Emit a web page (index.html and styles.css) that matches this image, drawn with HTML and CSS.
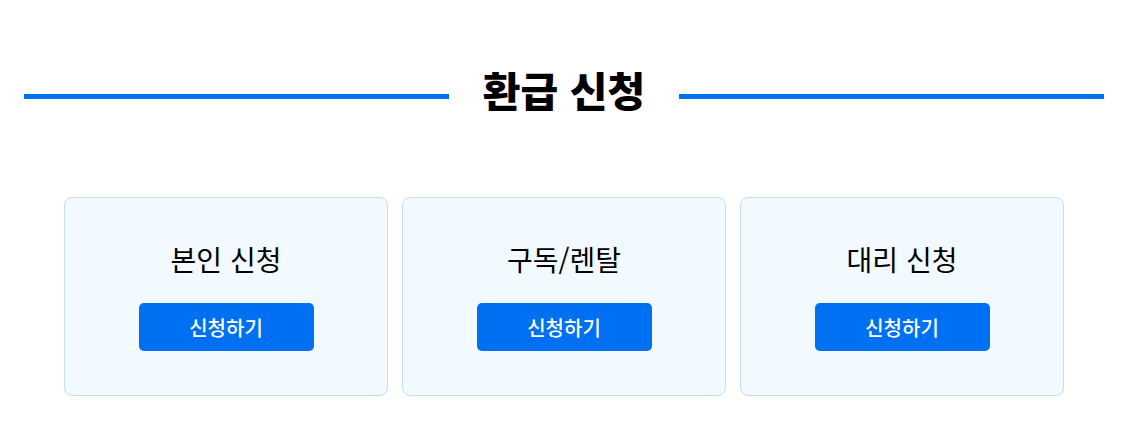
FILE: index.html
```html
<!DOCTYPE html>
<html lang="ko">
<head>
  <meta charset="UTF-8" />
  <meta name="viewport" content="width=device-width, initial-scale=1" />
  <title>환급 신청</title>
  <link rel="stylesheet" href="styles.css">
</head>
<body>

  <!-- 제목 -->
  <div class="section-title">
    <span class="line"></span>
    <h2>환급 신청</h2>
    <span class="line"></span>
  </div>

  <!-- 신청 유형 -->
  <div class="cards">
    <div class="card">
      <h3>본인 신청</h3>
      <button type="button">신청하기</button>
    </div>
    <div class="card">
      <h3>구독/렌탈</h3>
      <button type="button">신청하기</button>
    </div>
    <div class="card">
      <h3>대리 신청</h3>
      <button type="button">신청하기</button>
    </div>
  </div>

</body>
</html>
```

FILE: styles.css
```css
* {
  box-sizing: border-box;
}

body {
  margin: 0;
  font-family: 'Noto Sans CJK KR', 'Noto Sans', sans-serif;
  background-color: #ffffff;
  color: #000;
}

.section-title {
  display: flex;
  align-items: center;
  gap: 34px;
  width: 1080px;
  margin: 0 0 0 24px;
  padding-top: 64px;
}

.section-title .line {
  flex: 1;
  height: 5px;
  margin-top: 14px;
  background-color: #0070f3;
}

.section-title h2 {
  margin: 0;
  font-size: 41px;
  font-weight: 900;
  line-height: 50px;
}

.cards {
  display: flex;
  gap: 14px;
  width: 1000px;
  margin: 83px 0 0 64px;
}

.card {
  width: 324px;
  padding: 45px 0 44px;
  border: 1px solid #c3dcf7;
  border-radius: 8px;
  background-color: #f3faff;
  text-align: center;
}

.card h3 {
  margin: 0 0 28px;
  font-size: 28px;
  font-weight: 400;
  line-height: 32px;
}

.card button {
  width: 175px;
  height: 48px;
  border: none;
  border-radius: 5px;
  background-color: #0070f3;
  color: #fff;
  font-family: inherit;
  font-size: 20px;
  font-weight: 500;
}
```
